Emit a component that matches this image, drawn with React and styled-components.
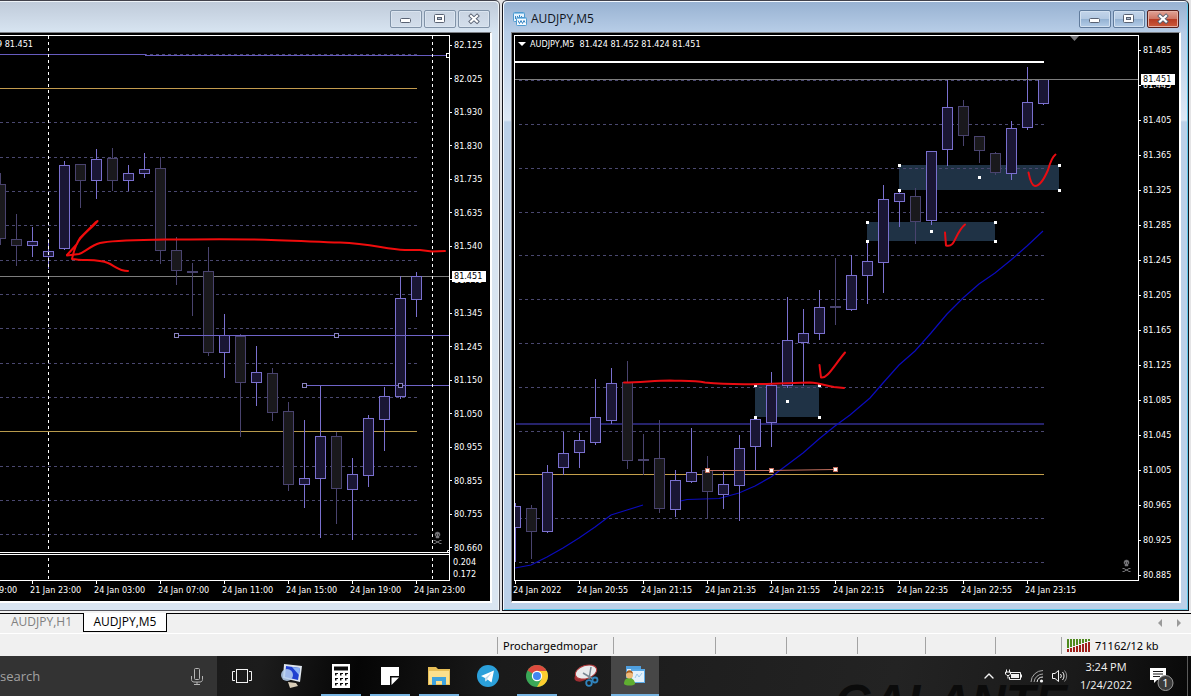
import styled, { createGlobalStyle } from 'styled-components';
import { ChevronUp } from 'lucide-react';

const GlobalStyle = createGlobalStyle`
  * {
    box-sizing: border-box;
  }
  body {
    margin: 0;
    background-color: #f0f0f0;
    font-family: 'Open Sans', 'Noto Sans', sans-serif;
  }
  ul {
    margin: 0;
    padding: 0;
    list-style: none;
  }
  button {
    padding: 0;
    border: none;
    font: inherit;
    cursor: pointer;
  }
`;

const Page = styled.div`
  display: flex;
  flex-direction: column;
  min-height: 100vh;
  overflow: hidden;
`;
const Workspace = styled.main`
  display: grid;
  grid-template-columns: minmax(0, 500fr) minmax(0, 691fr);
  background-color: #e4e4e6;
`;
const ChartWindow = styled.section`
  display: flex;
  flex-direction: column;
  margin: ${({ $active }) => ($active ? '0 2px' : '0')};
  border: 1px solid ${({ $active }) => ($active ? '#15151c' : '#55555c')};
  border-top-color: #42424c;
  border-left-width: ${({ $active }) => ($active ? '1px' : '0')};
  border-radius: ${({ $active }) => ($active ? '5px 5px 0 0' : '0 5px 0 0')};
  background: ${({ $active }) =>
    $active
      ? 'linear-gradient(#97b1d1 0, #b7cde7 31px, #dde8f5 119px, #bbd0e8 121px)'
      : 'linear-gradient(#bfcad9 0, #d7e4f1 31px, #dae5f1 100%)'};
  box-shadow: ${({ $active }) =>
    $active
      ? 'inset 1px 1px #f4f9ff, inset -1px -1px #5fc8ea'
      : 'inset -1px 1px #eef3f8'};
`;
const TitleBar = styled.header`
  display: flex;
  align-items: center;
  height: 31px;
  padding: 5px 9px 0 10px;
`;
const WindowTitle = styled.h2`
  flex: 1;
  margin: 0 0 0 4px;
  font-size: 12px;
  font-weight: 400;
  line-height: 16px;
  color: #10141c;
`;
const WindowButtons = styled.div`
  display: flex;
  gap: 2px;
  margin-left: auto;
`;
const WindowButton = styled.button`
  display: flex;
  align-items: center;
  justify-content: center;
  width: 32px;
  height: 18px;
  border: 1px solid ${({ $tone }) => TONES[$tone].border};
  border-radius: 2px;
  background: ${({ $tone }) => TONES[$tone].fill};
  box-shadow: inset 0 0 0 1px ${({ $tone }) => TONES[$tone].glow};
`;
const ChartBody = styled.div`
  display: grid;
  grid-template-columns: minmax(0, 1fr) 40px;
  grid-template-rows: 548px 20px;
  margin: 0 7px 7px ${({ $active }) => ($active ? '8px' : '0')};
  border: solid #ffffff;
  border-width: 1px 2px 2px ${({ $active }) => ($active ? '1px' : '0')};
  border-top-color: #7c7f84;
  border-left-color: #7c7f84;
  background-color: #000000;
  color: #ffffff;
  font-family: 'DejaVu Sans Condensed', 'DejaVu Sans', sans-serif;
  font-size: 9px;
  overflow: hidden;
`;
const PlotFrame = styled.div`
  margin: 2px 0 0 ${({ $active }) => ($active ? '2px' : '0')};
  border: 1px solid #ffffff;
  border-left-width: ${({ $active }) => ($active ? '1px' : '0')};
  overflow: hidden;
`;
const Plot = styled.svg`
  display: block;
  width: 100%;
  height: 544px;
`;
const PriceAxis = styled.div`
  position: relative;
  display: flex;
  flex-direction: column;
`;
const PriceList = styled.ul`
  display: flex;
  flex: 1;
  flex-direction: column;
  justify-content: space-between;
  padding-top: ${({ $top }) => $top}px;
`;
const PriceLabel = styled.li`
  display: flex;
  align-items: center;
  gap: 2px;
  line-height: 12px;
  &::before {
    content: '';
    width: 2px;
    height: 1px;
    background-color: #ffffff;
  }
`;
const SubAxis = styled.ul`
  height: 27px;
  padding: 2px 0 0 3px;
  line-height: 12px;
`;
const CurrentPrice = styled.output`
  position: absolute;
  top: ${({ $top }) => $top}px;
  left: 2px;
  width: 34px;
  height: 11px;
  padding-left: 2px;
  line-height: 11px;
  color: #000000;
  background-color: #ffffff;
`;
const TimeAxis = styled.ul`
  display: flex;
  grid-column: 1 / -1;
  margin-left: ${({ $shift }) => $shift}px;
`;
const TimeLabel = styled.li`
  flex: none;
  width: 64px;
  line-height: 12px;
  white-space: nowrap;
  &::before {
    content: '';
    display: block;
    width: 1px;
    height: 3px;
    margin-left: 2px;
    background-color: #ffffff;
  }
`;
const TabStrip = styled.nav`
  display: flex;
  height: 23px;
  padding-right: 8px;
  border-top: 2px solid #f4f4f4;
  border-bottom: 1px solid #ffffff;
  background: linear-gradient(#000000 1px, #f0f0f0 1px);
`;
const ChartTab = styled.button`
  width: 84px;
  height: 19px;
  border: solid ${({ $active }) => ($active ? '#000000' : 'transparent')};
  border-width: 0 1px 1px;
  background-color: ${({ $active }) => ($active ? '#ffffff' : 'transparent')};
  font-size: 12px;
  line-height: 18px;
  color: ${({ $active }) => ($active ? '#000000' : '#808080')};
  &:first-child {
    width: 83px;
  }
`;
const TabScroll = styled.div`
  display: flex;
  align-items: center;
  gap: 12px;
  margin-left: auto;
`;
const ScrollButton = styled.button`
  display: flex;
  background-color: transparent;
`;
const StatusBar = styled.footer`
  display: flex;
  height: 22px;
  padding: 3px 0 2px;
  background-color: #f0f0f0;
  font-family: 'Noto Sans', sans-serif;
  font-size: 11px;
  line-height: 17px;
  color: #000000;
`;
const StatusCell = styled.div`
  display: flex;
  align-items: center;
  gap: 4px;
  flex: ${({ $width }) => ($width ? `0 0 ${$width}px` : '1')};
  padding-left: 5px;
  border-left: ${({ $width }) => ($width ? '1px solid #a3a3a3' : 'none')};
`;
const Taskbar = styled.footer`
  position: relative;
  display: flex;
  height: 40px;
  overflow: hidden;
  background: linear-gradient(
    100deg,
    #161616 0,
    #1c1c1c 22%,
    #050505 30%,
    #1a1a1a 42%,
    #1f1f1f 60%,
    #232323 75%,
    #1a1a1a 90%,
    #080808 100%
  );
  color: #f2f2f2;
`;
const Wallpaper = styled.span`
  position: absolute;
  top: 20px;
  right: 124px;
  font-family: 'Liberation Sans', sans-serif;
  font-size: 48px;
  font-style: italic;
  font-weight: 700;
  line-height: 52px;
  color: #0b0b0b;
`;
const SearchBox = styled.label`
  position: relative;
  display: flex;
  align-items: center;
  width: 217px;
  padding-right: 14px;
  background-color: #333333;
`;
const SearchInput = styled.input`
  flex: 1;
  min-width: 0;
  padding: 0;
  border: none;
  outline: none;
  background-color: transparent;
  font-family: inherit;
  font-size: 13px;
  color: #ffffff;
  &::placeholder {
    color: #a2a2a2;
  }
`;
const AppList = styled.div`
  position: relative;
  display: flex;
  gap: 1px;
`;
const AppButton = styled.button`
  display: flex;
  align-items: center;
  justify-content: center;
  width: 48px;
  background: ${({ $active }) => ($active ? '#474747' : 'transparent')};
  background-image: ${({ $open }) =>
    $open ? 'linear-gradient(#76b3e0, #76b3e0)' : 'none'};
  background-position: bottom center;
  background-repeat: no-repeat;
  background-size: ${({ $active }) => ($active ? '48px' : '40px')} 2px;
  &:first-child {
    width: 50px;
  }
`;
const Tray = styled.div`
  position: relative;
  display: flex;
  align-items: center;
  gap: 8px;
  margin-left: auto;
`;
const TrayButton = styled.button`
  display: flex;
  background-color: transparent;
  color: #f2f2f2;
`;
const Clock = styled.time`
  width: 58px;
  margin-right: 6px;
  font-size: 11px;
  line-height: 18px;
  text-align: center;
  white-space: nowrap;
`;
const ShowDesktop = styled.button`
  align-self: stretch;
  width: 4px;
  border-left: 1px solid #5a5a5a;
  background-color: transparent;
`;

const TONES = {
  idle: {
    border: '#8193a8',
    fill: 'linear-gradient(#c9d4e2, #d3deeb)',
    glow: '#dbe5f0',
  },
  active: {
    border: '#607b9c',
    fill: 'linear-gradient(#c3d5ea 0, #b3c9e2 50%, #93b1d2 50%, #b5cde8 100%)',
    glow: '#d2e1f1',
  },
  close: {
    border: '#571f1c',
    fill: 'linear-gradient(#e0a397 0, #cf7462 50%, #b63a22 50%, #cc5b3d 100%)',
    glow: '#e6b0a4',
  },
};

// candle: [x, high, top, bottom, low, rising]
const H1_CANDLES = [
  [0, 173, 184, 239, 244, 0],
  [16, 214, 239, 246, 265, 0],
  [32, 227, 241, 246, 256, 1],
  [48, 239, 251, 257, 268, 1],
  [64, 161, 165, 249, 249, 1],
  [80, 164, 164, 181, 207, 0],
  [96, 149, 159, 181, 198, 1],
  [112, 148, 158, 181, 190, 0],
  [128, 165, 173, 181, 190, 1],
  [144, 153, 169, 174, 177, 1],
  [160, 157, 168, 251, 263, 0],
  [176, 237, 250, 271, 284, 0],
  [192, 263, 271, 272, 315, 0],
  [208, 247, 271, 353, 355, 0],
  [224, 314, 335, 353, 377, 1],
  [240, 334, 336, 383, 436, 0],
  [256, 346, 372, 383, 405, 1],
  [272, 368, 373, 413, 420, 0],
  [288, 402, 411, 485, 490, 0],
  [304, 420, 478, 485, 507, 1],
  [320, 386, 436, 479, 537, 1],
  [336, 432, 436, 489, 523, 0],
  [352, 458, 474, 490, 539, 1],
  [368, 415, 418, 476, 486, 1],
  [384, 387, 396, 420, 450, 1],
  [400, 276, 298, 397, 398, 1],
  [416, 272, 276, 300, 316, 1],
];

const M5_CANDLES = [
  [515, 503, 506, 528, 561, 1],
  [531, 505, 508, 532, 558, 0],
  [547, 465, 472, 532, 532, 1],
  [563, 432, 453, 468, 474, 1],
  [579, 433, 440, 453, 467, 1],
  [595, 379, 417, 443, 444, 1],
  [611, 368, 383, 421, 423, 1],
  [627, 361, 382, 461, 468, 0],
  [643, 434, 459, 461, 474, 0],
  [659, 420, 458, 509, 512, 0],
  [675, 470, 480, 510, 516, 1],
  [691, 428, 472, 482, 482, 1],
  [707, 456, 470, 492, 517, 0],
  [723, 472, 484, 495, 508, 1],
  [739, 435, 448, 486, 520, 1],
  [755, 417, 419, 447, 469, 1],
  [771, 372, 385, 423, 446, 1],
  [787, 297, 340, 386, 387, 1],
  [803, 309, 333, 343, 385, 1],
  [819, 290, 307, 334, 339, 1],
  [835, 258, 306, 308, 324, 0],
  [851, 255, 275, 310, 310, 1],
  [867, 240, 261, 276, 303, 1],
  [883, 185, 199, 263, 292, 1],
  [899, 190, 193, 202, 226, 1],
  [915, 188, 196, 222, 243, 0],
  [931, 151, 151, 221, 224, 1],
  [947, 80, 107, 150, 165, 1],
  [963, 100, 106, 136, 145, 0],
  [979, 136, 136, 151, 162, 0],
  [995, 152, 153, 173, 174, 0],
  [1011, 121, 128, 174, 179, 1],
  [1027, 67, 102, 128, 129, 1],
  [1043, 79, 79, 104, 104, 1],
];

const H1_PRICES = [
  '82.125', '82.025', '81.930', '81.830', '81.735', '81.635', '81.540',
  '81.440', '81.345', '81.245', '81.150', '81.050', '80.955', '80.855',
  '80.755', '80.660',
];
const M5_PRICES = [
  '81.485', '81.445', '81.405', '81.365', '81.325', '81.285', '81.245',
  '81.205', '81.165', '81.125', '81.085', '81.045', '81.005', '80.965',
  '80.925', '80.885',
];
const H1_TIMES = [
  '21 Jan 19:00', '21 Jan 23:00', '24 Jan 03:00', '24 Jan 07:00',
  '24 Jan 11:00', '24 Jan 15:00', '24 Jan 19:00', '24 Jan 23:00',
];
const M5_TIMES = [
  '24 Jan 2022', '24 Jan 20:55', '24 Jan 21:15', '24 Jan 21:35',
  '24 Jan 21:55', '24 Jan 22:15', '24 Jan 22:35', '24 Jan 22:55',
  '24 Jan 23:15',
];
const H1_GRID = [54, 122, 157, 191, 225, 260, 294, 328, 363, 397, 466, 500, 534];
const M5_GRID = [80, 124, 168, 212, 255, 299, 343, 387, 431, 518, 562];
const ZONES = [
  { x: 899, y: 165, w: 160, h: 25 },
  { x: 867, y: 222, w: 128, h: 19 },
  { x: 755, y: 385, w: 64, h: 32 },
];

const HLine = ({ x1, x2, y, color, dash }) => (
  <line
    x1={x1}
    x2={x2}
    y1={y + 0.5}
    y2={y + 0.5}
    stroke={color}
    strokeDasharray={dash}
  />
);

const Candles = ({ data }) =>
  data.map(([x, high, top, bottom, low, rising]) => {
    const stroke = rising ? '#7a70cf' : '#49436e';
    return (
      <g key={x} stroke={stroke} shapeRendering="crispEdges">
        <line x1={x + 0.5} x2={x + 0.5} y1={high} y2={low + 1} />
        <rect
          x={x - 4.5}
          y={top + 0.5}
          width="10"
          height={Math.max(bottom - top - 1, 1)}
          fill={rising ? '#1a1634' : '#1a191d'}
        />
      </g>
    );
  });

const Handle = ({ x, y }) => (
  <rect x={x - 1} y={y - 1} width="3" height="3" fill="#ffffff" />
);

const RingHandle = ({ x, y, fill = '#000000', stroke = '#8a83c0' }) => (
  <rect
    x={x - 1.5}
    y={y - 1.5}
    width="4"
    height="4"
    fill={fill}
    stroke={stroke}
  />
);

const Skull = ({ x, y }) => (
  <g transform={`translate(${x} ${y})`} fill="none" stroke="#77777a">
    <path d="M2 2.500a2.500 2.500 0 0 1 5 0c0 1-.5 1.500-1 2v1.500h-3V4.500c-.5-.5-1-1-1-2z" fill="#77777a" strokeWidth="0.500" />
    <path d="M3 3h1M5 3h1" stroke="#000000" />
    <path d="M0.500 8.500h1.500L7 11.500h1.500M8.500 8.500H7L2 11.500H0.500" />
  </g>
);

const H1Plot = () => (
  <Plot role="img" aria-label="AUDJPY hourly candles">
    <g transform="translate(0 -36)">
      {H1_GRID.map((y) => (
        <HLine key={y} x1={0} x2={417} y={y} color="#4a4870" dash="3 3" />
      ))}
      <HLine x1={0} x2={417} y={88} color="#c39b4e" />
      <HLine x1={0} x2={417} y={431} color="#b89a4c" />
      <HLine x1={0} x2={450} y={276} color="#7d7d7d" />
      <HLine x1={0} x2={146} y={54} color="#675cc0" />
      <HLine x1={145} x2={450} y={55} color="#675cc0" />
      <Candles data={H1_CANDLES} />
      <HLine x1={176} x2={450} y={335} color="#6f64c8" />
      <HLine x1={304} x2={450} y={385} color="#6f64c8" />
      <g shapeRendering="crispEdges">
        <RingHandle x={176} y={335} />
        <RingHandle x={336} y={335} />
        <RingHandle x={304} y={385} />
        <RingHandle x={400} y={385} />
        <RingHandle x={448} y={55} stroke="#ffffff" />
      </g>
      <path
        d="M48.500 36V580M432.500 36V580"
        stroke="#ffffff"
        strokeDasharray="3 3"
      />
      <Skull x={433} y={532} />
      <rect x="0" y="552" width="100%" height="1" fill="#ffffff" />
      <rect x="0" y="553" width="100%" height="1" fill="#000000" />
      <rect x="0" y="554" width="100%" height="1" fill="#ffffff" />
      <path d="M447.500 552v-1.500h2" stroke="#ffffff" fill="none" />
      <g
        fill="none"
        stroke="#f00c0c"
        strokeWidth="2"
        strokeLinecap="round"
        strokeLinejoin="round"
      >
        <path d="M445 251L432 251.500L420 250L405 250C385 249 372 244 340 242.500C310 241.500 280 240 250 239.500C220 239 190 239.500 165 239.500C140 240 112 240 100 243C90 246 85 252 79 254L67 255.500" />
        <path d="M97.500 221C90 230 80 236 77 244L67 255M96 222L80 238C76 244 74 250 72 259C85 261 98 259 108 263C115 266 119 271 128 271" />
      </g>
      <text x="33" y="47" fill="#ffffff" textAnchor="end">
        81.449 81.451
      </text>
    </g>
  </Plot>
);

const M5Plot = () => (
  <Plot role="img" aria-label="AUDJPY five minute candles">
    <g transform="translate(-515 -36)">
      {ZONES.map((z) => (
        <rect key={z.x} x={z.x} y={z.y} width={z.w} height={z.h} fill="#1f3245" />
      ))}
      {M5_GRID.map((y) => (
        <HLine key={y} x1={519} x2={1044} y={y} color="#4a4870" dash="3 3" />
      ))}
      <HLine x1={515} x2={1044} y={474} color="#c5a04c" />
      <rect x="516" y="423" width="528" height="2" fill="#26236c" />
      <path
        d="M515 568L531 565L547 557L563 548L579 538L595 527L611 515L627 510L643 505M672 503L687 499.500L719 498.500L739 493L755 486L771 477L787 465L803 453L819 439L835 426L850 415L870 398L883 383L899 365L915 351L931 333L947 314L963 298L979 284L995 273L1011 260L1027 246L1043 231"
        fill="none"
        stroke="#0b0bbd"
        strokeWidth="1.200"
      />
      <Candles data={M5_CANDLES} />
      <HLine x1={515} x2={1139} y={79} color="#7d7d7d" />
      <rect x="515" y="61" width="529" height="2" fill="#ffffff" />
      {ZONES.map((z) => (
        <g key={z.x}>
          <Handle x={z.x} y={z.y} />
          <Handle x={z.x + z.w} y={z.y} />
          <Handle x={z.x} y={z.y + z.h} />
          <Handle x={z.x + z.w} y={z.y + z.h} />
          <Handle x={z.x + z.w / 2} y={Math.floor(z.y + z.h / 2)} />
        </g>
      ))}
      <path d="M707 470.500H771L835 469.500" fill="none" stroke="#c4705f" />
      <g shapeRendering="crispEdges">
        <RingHandle x={707} y={470} fill="#ffffff" stroke="#c4705f" />
        <RingHandle x={771} y={470} fill="#ffffff" stroke="#c4705f" />
        <RingHandle x={835} y={469} fill="#ffffff" stroke="#c4705f" />
      </g>
      <g
        fill="none"
        stroke="#e80c12"
        strokeWidth="2"
        strokeLinecap="round"
        strokeLinejoin="round"
      >
        <path d="M624 382.500C640 382.500 655 380.500 670 380.500C685 381 695 380.500 705 382.500C720 384 740 384.500 760 384C780 383.500 800 382.500 810 382.500C820 383 826 386 834 387L844 388" />
        <path d="M819.500 365L821 377.500C827 379 833 367 845 352.500" />
        <path d="M945 232.500L946 245.500C956 248 954 234 965 224.500" />
        <path d="M1028.500 172.500C1030 180 1032 186 1035 186C1040 186 1045 177 1048 170C1050 163 1052 157 1055.500 154.500" />
      </g>
      <path d="M518 42h8l-4 4z" fill="#ffffff" />
      <path d="M1070 36h9l-4.500 5z" fill="#77777a" />
      <text x="530" y="47" fill="#ffffff" xmlSpace="preserve">
        {'AUDJPY,M5  81.424 81.452 81.424 81.451'}
      </text>
      <Skull x={1122} y={560} />
    </g>
  </Plot>
);

const WindowControls = ({ active }) => (
  <WindowButtons>
    <WindowButton $tone={active ? 'active' : 'idle'} aria-label="Minimize">
      <svg width="12" height="14">
        <rect x="0.500" y="6.500" width="10" height="4" rx="1" fill="#ffffff" stroke="#596273" />
      </svg>
    </WindowButton>
    <WindowButton $tone={active ? 'active' : 'idle'} aria-label="Restore">
      <svg width="12" height="14">
        <rect x="0.500" y="2.500" width="10" height="8" rx="1" fill="#ffffff" stroke="#596273" />
        <rect x="3.500" y="5.500" width="4" height="2" fill="#aebccd" stroke="#596273" />
      </svg>
    </WindowButton>
    <WindowButton $tone={active ? 'close' : 'idle'} aria-label="Close">
      <svg width="12" height="14" fill="none">
        <path d="M3 4L9 9.500M9 4L3 9.500" stroke="#596273" strokeWidth="4" strokeLinecap="square" />
        <path d="M3 4L9 9.500M9 4L3 9.500" stroke="#ffffff" strokeWidth="2.200" strokeLinecap="square" />
      </svg>
    </WindowButton>
  </WindowButtons>
);

const ChartIcon = () => (
  <svg width="14" height="15" fill="none">
    <rect x="0.500" y="0.500" width="11" height="9" rx="1" fill="#e6f3fd" stroke="#4f9ad0" />
    <path d="M1 1.500h10" stroke="#8cc4ea" />
    <path d="M2.500 4v3M4.500 4v2M6.500 3v2M8.500 4v1" stroke="#3d88c4" />
    <rect x="3.500" y="5.500" width="10" height="8" rx="1" fill="#f4faff" stroke="#4f9ad0" />
    <path d="M4 6.500h9" stroke="#8cc4ea" />
    <path d="M5 8.500l1.500 3L8 8.500l1.500 3L11 8.500l1 2" stroke="#3d88c4" />
  </svg>
);

const TrafficIcon = () => (
  <svg width="24" height="13">
    {[0, 1, 2, 3, 4, 5, 6, 7].map((i) => (
      <g key={i}>
        <rect x={i * 3} y="0" width="2" height={9 - i} fill="#4f8a1e" />
        <rect x={i * 3} y={10 - i} width="2" height={3 + i} fill="#a0201a" />
      </g>
    ))}
  </svg>
);

const TaskViewIcon = () => (
  <svg width="20" height="16" fill="none" stroke="#f2f2f2">
    <rect x="4.500" y="1.500" width="11" height="13" />
    <path d="M3 3.500H0.500V12.500H3M17 3.500H19.500V12.500H17" />
  </svg>
);
const RemoteIcon = () => (
  <svg width="24" height="26">
    <path d="M4 1l18 2-2 16-17-4z" fill="#dfe6ee" />
    <path d="M6 3l14 2-2 12-13-3z" fill="#1f3fd0" />
    <path d="M12 4l8 1-1 7z" fill="#8db4f5" />
    <circle cx="7" cy="12" r="6" fill="#b7d0ee" opacity="0.850" />
    <path d="M8 19l8 1 2 3-8 2z" fill="#d8cdb8" />
  </svg>
);
const CalculatorIcon = () => (
  <svg width="18" height="24">
    <rect width="18" height="24" fill="#ffffff" />
    <path d="M2 2.500h14v4H2z" fill="#0c0c0c" />
    {[9, 14, 19].map((y) =>
      [3, 8, 13].map((x) => (
        <path key={`${x}_${y}`} d={`M${x} ${y}h3v1h-1.500v1.500h-1.500z`} fill="#0c0c0c" />
      ))
    )}
  </svg>
);
const StickyIcon = () => (
  <svg width="18" height="18">
    <path d="M0 0h18v9h-9v9H0z" fill="#ffffff" />
    <path d="M10.500 18V10.500H18z" fill="#ffffff" />
  </svg>
);
const ExplorerIcon = () => (
  <svg width="22" height="20">
    <path d="M0 1h8l2 2h12v16H0z" fill="#e8bf57" />
    <path d="M1 5h20v13H1z" fill="#fbe08d" />
    <path d="M4 19v-8h14v8h-4v-4H8v4z" fill="#3fa3dd" />
  </svg>
);
const TelegramIcon = () => (
  <svg width="22" height="22">
    <circle cx="11" cy="11" r="11" fill="#2ba0da" />
    <path d="M4 11l13-5.500-2.500 12-4-3-2 2-.5-3.500z" fill="#ffffff" />
    <path d="M8 13l7-5.500-5 6.500-1.500 2.500z" fill="#bcd9ea" />
  </svg>
);
const ChromeIcon = () => (
  <svg width="22" height="22">
    <circle cx="11" cy="11" r="11" fill="#3aa757" />
    <path d="M11 11L1.500 5.500A11 11 0 0 1 20.500 5.500z" fill="#dd4b3e" />
    <path d="M11 11V6h9.800A11 11 0 0 1 11 22l4.500-8z" fill="#fccd2f" />
    <circle cx="11" cy="11" r="5.200" fill="#ffffff" />
    <circle cx="11" cy="11" r="4" fill="#4286f0" />
  </svg>
);
const SnipIcon = () => (
  <svg width="25" height="24" fill="none">
    <ellipse cx="8" cy="12" rx="8" ry="5" fill="#a02e32" transform="rotate(-25 8 12)" />
    <ellipse cx="12" cy="8" rx="11" ry="6.500" fill="#e9eaec" stroke="#b13a3c" transform="rotate(-18 12 8)" />
    <path d="M17 3l-2 12M9 9l10 6" stroke="#7b8792" strokeWidth="1.500" />
    <circle cx="15" cy="19" r="2.800" stroke="#3084bd" strokeWidth="1.800" />
    <circle cx="21" cy="16" r="2.500" stroke="#3084bd" strokeWidth="1.800" />
  </svg>
);
const TraderIcon = () => (
  <svg width="22" height="20">
    <rect x="2" y="0" width="15" height="12" fill="#4f9fdf" />
    <rect x="3" y="3" width="13" height="8" fill="#d8ecfb" />
    <rect x="7" y="3" width="14" height="14" fill="#5aa9e6" />
    <rect x="8" y="5" width="12" height="11" fill="#e3f1fb" />
    <path d="M11 12l2-4 2 3 3-4" fill="none" stroke="#9cc8ea" />
    <path d="M0 18c0-4 2-6 5-6s6 2 6 6c-2 2-9 2-11 0z" fill="#5fae30" />
    <circle cx="5.500" cy="9" r="3.500" fill="#f0b878" />
    <path d="M2 8c0-5 7-5 7 0-2-2-5-2-7 0z" fill="#a65c1c" />
  </svg>
);

const MicIcon = () => (
  <svg width="12" height="17" fill="none" stroke="#b5b5b5">
    <rect x="3.500" y="0.500" width="5" height="11" rx="1" />
    <path d="M0.500 8v3.500c0 1.500 1 2.500 2.500 2.500h6c1.500 0 2.500-1 2.500-2.500V8M6 14v2M3 16.500h6" />
  </svg>
);
const BatteryIcon = () => (
  <svg width="17" height="14" fill="none" stroke="#f2f2f2">
    <path d="M5 3.500H15.500V10.500H4.500V8" />
    <path d="M6 5h8v4H6zM16 5.500h1v3h-1z" fill="#f2f2f2" stroke="none" />
    <path d="M1.500 0.500v3M4.500 0.500v3M0.500 3h5v2l-1.500 1.500h-2L.5 5zM3 6.500v3" />
  </svg>
);
const WifiIcon = () => (
  <svg width="14" height="14" fill="none" stroke="#a8a8a8">
    <path d="M1 13A12 12 0 0 1 13 1.500M4 13A9 9 0 0 1 13 5" />
    <path d="M7 13A6 6 0 0 1 13 8" stroke="#f2f2f2" />
    <circle cx="11.500" cy="12" r="1.600" fill="#f2f2f2" stroke="none" />
  </svg>
);
const VolumeIcon = () => (
  <svg width="17" height="14" fill="none" stroke="#f2f2f2">
    <path d="M0.500 4.500h2.500L6.500 1.500v11L3 9.500H0.500z" />
    <path d="M8.500 5a3 3 0 0 1 0 4M10.500 3a6 6 0 0 1 0 8" />
    <path d="M12.500 1.500a8 8 0 0 1 0 11" stroke="#8f8f8f" />
  </svg>
);
const NotesIcon = () => (
  <svg width="30" height="32">
    <path d="M1 8h16v12H8l-3 3v-3H1z" fill="#ffffff" />
    <path d="M4 11.500h10M4 14h10M4 16.500h7" stroke="#1a1a1a" />
    <circle cx="16.500" cy="23" r="7.500" fill="#3b3b3b" stroke="#9a9a9a" />
    <text x="16.500" y="27" fill="#ffffff" fontSize="11" textAnchor="middle">
      1
    </text>
  </svg>
);

const APPS = [
  { name: 'Task View', Icon: TaskViewIcon },
  { name: 'Remote Desktop', Icon: RemoteIcon },
  { name: 'Calculator', Icon: CalculatorIcon, open: true },
  { name: 'Sticky Notes', Icon: StickyIcon, open: true },
  { name: 'File Explorer', Icon: ExplorerIcon, open: true },
  { name: 'Telegram', Icon: TelegramIcon },
  { name: 'Chrome', Icon: ChromeIcon, open: true },
  { name: 'Snipping Tool', Icon: SnipIcon },
  { name: 'Trader', Icon: TraderIcon, open: true, active: true },
];

const App = () => {
  return (
    <Page>
      <GlobalStyle />
      <Workspace>
        <ChartWindow>
          <TitleBar>
            <WindowControls />
          </TitleBar>
          <ChartBody>
            <PlotFrame>
              <H1Plot />
            </PlotFrame>
            <PriceAxis>
              <PriceList $top={6}>
                {H1_PRICES.map((price) => (
                  <PriceLabel key={price}>{price}</PriceLabel>
                ))}
              </PriceList>
              <SubAxis>
                <li>0.204</li>
                <li>0.172</li>
              </SubAxis>
              <CurrentPrice $top={238}>81.451</CurrentPrice>
            </PriceAxis>
            <TimeAxis $shift={-34}>
              {H1_TIMES.map((time) => (
                <TimeLabel key={time}>{time}</TimeLabel>
              ))}
            </TimeAxis>
          </ChartBody>
        </ChartWindow>
        <ChartWindow $active>
          <TitleBar>
            <ChartIcon />
            <WindowTitle>AUDJPY,M5</WindowTitle>
            <WindowControls active />
          </TitleBar>
          <ChartBody $active>
            <PlotFrame $active>
              <M5Plot />
            </PlotFrame>
            <PriceAxis>
              <PriceList $top={11}>
                {M5_PRICES.map((price) => (
                  <PriceLabel key={price}>{price}</PriceLabel>
                ))}
              </PriceList>
              <CurrentPrice $top={41}>81.451</CurrentPrice>
            </PriceAxis>
            <TimeAxis $shift={1}>
              {M5_TIMES.map((time) => (
                <TimeLabel key={time}>{time}</TimeLabel>
              ))}
            </TimeAxis>
          </ChartBody>
        </ChartWindow>
      </Workspace>
      <TabStrip>
        <ChartTab>AUDJPY,H1</ChartTab>
        <ChartTab $active>AUDJPY,M5</ChartTab>
        <TabScroll>
          <ScrollButton aria-label="Previous">
            <svg width="6" height="8">
              <path d="M5 0v8L1 4z" fill="#9a9a9a" />
            </svg>
          </ScrollButton>
          <ScrollButton aria-label="Next">
            <svg width="8" height="8">
              <path d="M2 0v8l4-4z" fill="#9a9a9a" />
            </svg>
          </ScrollButton>
        </TabScroll>
      </TabStrip>
      <StatusBar>
        <StatusCell />
        <StatusCell $width={116}>Prochargedmopar</StatusCell>
        {[102, 71, 71, 68, 70, 66].map((width, i) => (
          <StatusCell key={i} $width={width} />
        ))}
        <StatusCell $width={130}>
          <TrafficIcon />
          71162/12 kb
        </StatusCell>
      </StatusBar>
      <Taskbar>
        <Wallpaper aria-hidden="true">GALANTE</Wallpaper>
        <SearchBox>
          <SearchInput type="text" placeholder="search" aria-label="search" />
          <MicIcon />
        </SearchBox>
        <AppList>
          {APPS.map(({ name, Icon, open, active }) => (
            <AppButton key={name} aria-label={name} $open={open} $active={active}>
              <Icon />
            </AppButton>
          ))}
        </AppList>
        <Tray>
          <TrayButton aria-label="Hidden icons">
            <ChevronUp size={16} strokeWidth={2} />
          </TrayButton>
          <TrayButton aria-label="Battery">
            <BatteryIcon />
          </TrayButton>
          <TrayButton aria-label="Network">
            <WifiIcon />
          </TrayButton>
          <TrayButton aria-label="Volume">
            <VolumeIcon />
          </TrayButton>
          <Clock>
            3:24 PM
            <br />
            1/24/2022
          </Clock>
          <TrayButton aria-label="Notifications">
            <NotesIcon />
          </TrayButton>
          <ShowDesktop aria-label="Show desktop" />
        </Tray>
      </Taskbar>
    </Page>
  );
};

export default App;
